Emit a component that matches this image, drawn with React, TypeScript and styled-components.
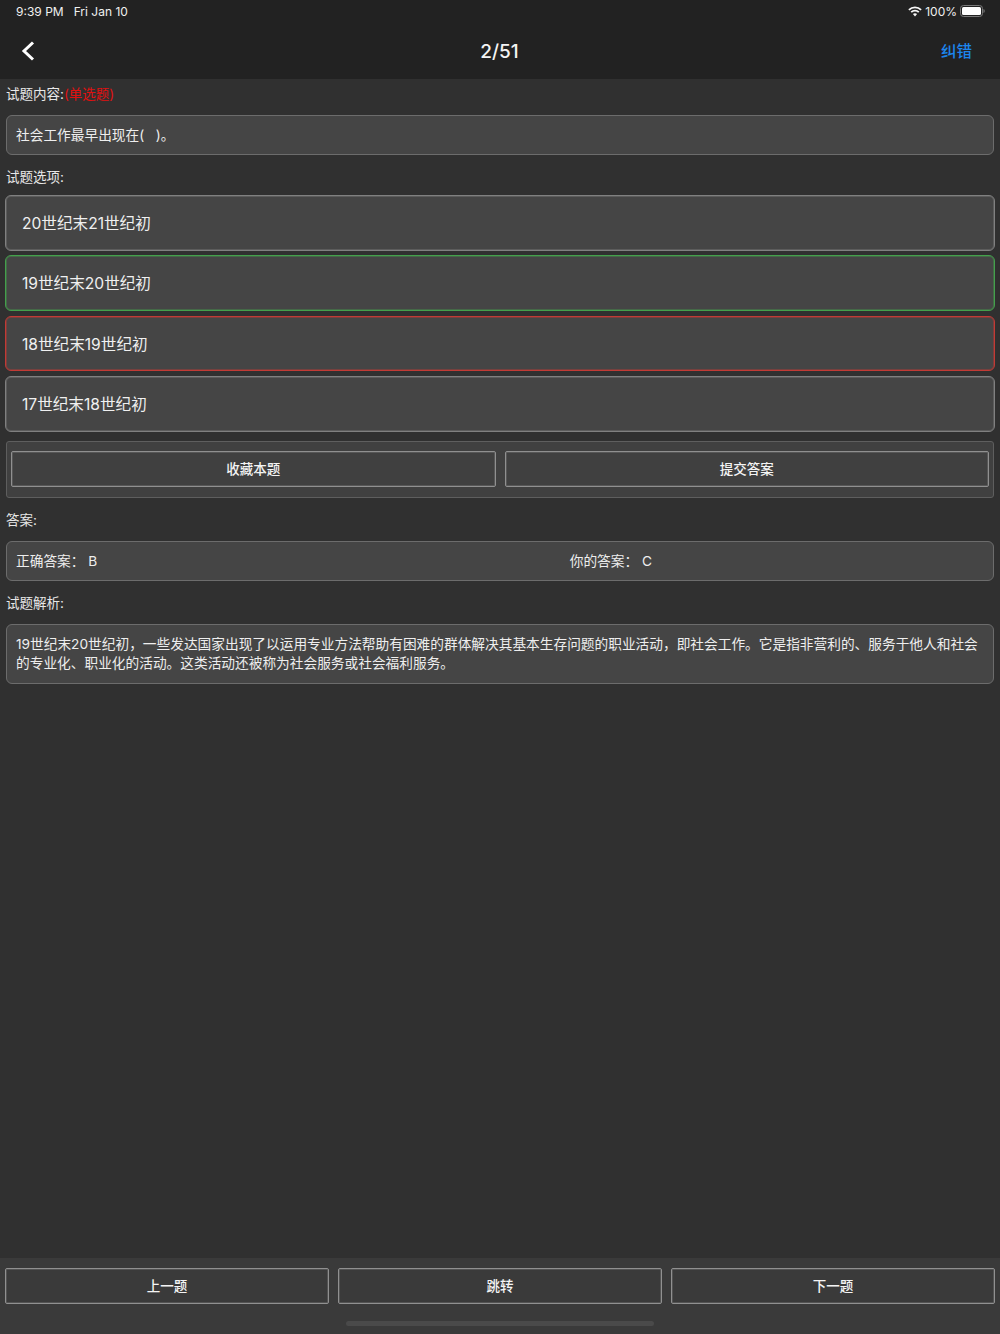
import React from "react";
import styled, { createGlobalStyle } from "styled-components";

const Global = createGlobalStyle`
  html, body { margin: 0; padding: 0; background: #303030; }
  body { font-family: "Inter", "Noto Sans CJK SC", "Liberation Sans", sans-serif; color: #e8e8e8; }
  * { box-sizing: border-box; }
`;

const Page = styled.div`
  width: 1000px;
  height: 1334px;
  display: flex;
  flex-direction: column;
  background: #303030;
`;

const Header = styled.header`
  height: 79px;
  flex: none;
  background: #222222;
  display: flex;
  flex-direction: column;
`;

const StatusBar = styled.div`
  height: 22px;
  padding: 0 15px 0 16px;
  display: flex;
  align-items: center;
  justify-content: space-between;
  font-size: 12px;
  color: #f0f0f0;
`;

const StatusGroup = styled.div<{ $gap: number }>`
  display: flex;
  align-items: center;
  gap: ${(p) => p.$gap}px;
`;

const NavBar = styled.nav`
  flex: 1;
  display: grid;
  grid-template-columns: 1fr auto 1fr;
  align-items: center;
  padding: 0 28px;
`;

const BackButton = styled.button`
  border: 0;
  background: none;
  padding: 0;
  margin-left: -8px;
  width: 16px;
  height: 22px;
  display: block;
`;

const NavTitle = styled.div`
  font-size: 19px;
  font-weight: 500;
  color: #f4f4f4;
  margin-top: 2px;
  margin-right: 1px;
`;

const NavAction = styled.div`
  justify-self: end;
  font-size: 15.5px;
  font-weight: 500;
  color: #1c86ee;
  margin-top: -2px;
`;

const Main = styled.main`
  flex: 1;
  padding: 0 6px;
  display: flex;
  flex-direction: column;
`;

const Label = styled.div<{ $h: number; $shift: number }>`
  height: ${(p) => p.$h}px;
  font-size: 13.5px;
  line-height: 18px;
  padding-top: ${(p) => Math.max(p.$shift, 0)}px;
  padding-bottom: ${(p) => Math.max(-p.$shift, 0)}px;
  display: flex;
  align-items: center;
  color: #e8e8e8;
`;

const Red = styled.span`
  color: #e01010;
`;

const Box = styled.div<{ $h: number }>`
  height: ${(p) => p.$h}px;
  background: #454545;
  border: 1px solid #6c6c6c;
  border-radius: 6px;
  padding: 0 9px;
  font-size: 13.7px;
  line-height: 19px;
  display: flex;
  align-items: center;
  color: #eeeeee;
`;

const AnswerCell = styled.div<{ $wide?: boolean }>`
  flex: ${(p) => (p.$wide ? "0 0 57.2%" : "1")};
  padding-top: 1px;
`;

const OptionList = styled.div`
  margin: 0 -1px;
  display: flex;
  flex-direction: column;
  gap: 4.8px;
`;

const Option = styled.div<{ $c: string }>`
  height: 55.6px;
  background: #454545;
  border: 1px solid ${(p) => p.$c};
  box-shadow: inset 0 0 0 1px ${(p) => p.$c}66;
  border-radius: 6px;
  padding: 0 16px 2px;
  font-size: 15.6px;
  display: flex;
  align-items: center;
  color: #f0f0f0;
`;

const ActionPanel = styled.div`
  margin-top: 9px;
  height: 57px;
  background: #404040;
  border: 1px solid #5e5e5e;
  border-radius: 3px;
  padding: 0 4px;
  display: flex;
  align-items: center;
  gap: 9px;
`;

const Btn = styled.button`
  flex: 1;
  height: 36px;
  background: transparent;
  border: 1px solid #909090;
  box-shadow: inset 0 0 0 1px rgba(144, 144, 144, 0.3);
  border-radius: 2px;
  font-family: inherit;
  font-size: 13.5px;
  font-weight: 500;
  color: #f4f4f4;
  padding: 0 0 2px;
`;

const Footer = styled.footer`
  height: 76px;
  flex: none;
  background: #3a3a3a;
  padding: 10px 5px 0;
  position: relative;
`;

const FooterRow = styled.div`
  display: flex;
  gap: 9px;
`;

const HomeBar = styled.div`
  position: absolute;
  left: 346px;
  bottom: 8px;
  width: 308px;
  height: 5px;
  border-radius: 3px;
  background: #4a4a4a;
`;

const options = [
  { t: "20世纪末21世纪初", c: "#808080" },
  { t: "19世纪末20世纪初", c: "#44a04c" },
  { t: "18世纪末19世纪初", c: "#c23a35" },
  { t: "17世纪末18世纪初", c: "#808080" },
];

export default function App() {
  return (
    <Page>
      <Global />
      <Header>
        <StatusBar>
          <StatusGroup $gap={10}>
            <span>9:39 PM</span>
            <span>Fri Jan 10</span>
          </StatusGroup>
          <StatusGroup $gap={3}>
            <svg width="14" height="11" viewBox="0 0 14 11">
              <path d="M.9 3.9a8.6 8.6 0 0 1 12.2 0" fill="none" stroke="#f6f6f6" strokeWidth="1.8" />
              <path d="M3.2 6.2a5.4 5.4 0 0 1 7.6 0" fill="none" stroke="#f6f6f6" strokeWidth="1.8" />
              <path d="M7 10.6 4.9 8.1Q7 6.4 9.1 8.1Z" fill="#f6f6f6" />
            </svg>
            <span>100%</span>
            <svg width="25" height="12" viewBox="0 0 25 12">
              <rect x="0.5" y="0.5" width="22" height="11" rx="3" fill="none" stroke="#7a7a7a" />
              <rect x="2" y="2" width="19" height="8" rx="1.5" fill="#fff" />
              <path d="M23.5 4v4c.7-.2 1.2-1 1.2-2s-.5-1.8-1.2-2z" fill="#7a7a7a" />
            </svg>
          </StatusGroup>
        </StatusBar>
        <NavBar>
          <BackButton aria-label="返回">
            <svg width="16" height="22" viewBox="0 0 16 22">
              <path d="M13 2.5 4 11l9 8.5" fill="none" stroke="#fff" strokeWidth="3" />
            </svg>
          </BackButton>
          <NavTitle>2/51</NavTitle>
          <NavAction>纠错</NavAction>
        </NavBar>
      </Header>
      <Main>
        <Label $h={36} $shift={-6}>
          试题内容:<Red>(单选题)</Red>
        </Label>
        <Box $h={40}>社会工作最早出现在(&nbsp;&nbsp;&nbsp;)。</Box>
        <Label $h={40} $shift={3}>试题选项:</Label>
        <OptionList>
          {options.map((o) => (
            <Option key={o.t} $c={o.c}>
              {o.t}
            </Option>
          ))}
        </OptionList>
        <ActionPanel>
          <Btn>收藏本题</Btn>
          <Btn>提交答案</Btn>
        </ActionPanel>
        <Label $h={43} $shift={1}>答案:</Label>
        <Box $h={40}>
          <AnswerCell $wide>正确答案：&nbsp;B</AnswerCell>
          <AnswerCell>你的答案：&nbsp;C</AnswerCell>
        </Box>
        <Label $h={43} $shift={1}>试题解析:</Label>
        <Box $h={60}>
          19世纪末20世纪初，一些发达国家出现了以运用专业方法帮助有困难的群体解决其基本生存问题的职业活动，即社会工作。它是指非营利的、服务于他人和社会的专业化、职业化的活动。这类活动还被称为社会服务或社会福利服务。
        </Box>
      </Main>
      <Footer>
        <FooterRow>
          <Btn>上一题</Btn>
          <Btn>跳转</Btn>
          <Btn>下一题</Btn>
        </FooterRow>
        <HomeBar />
      </Footer>
    </Page>
  );
}
